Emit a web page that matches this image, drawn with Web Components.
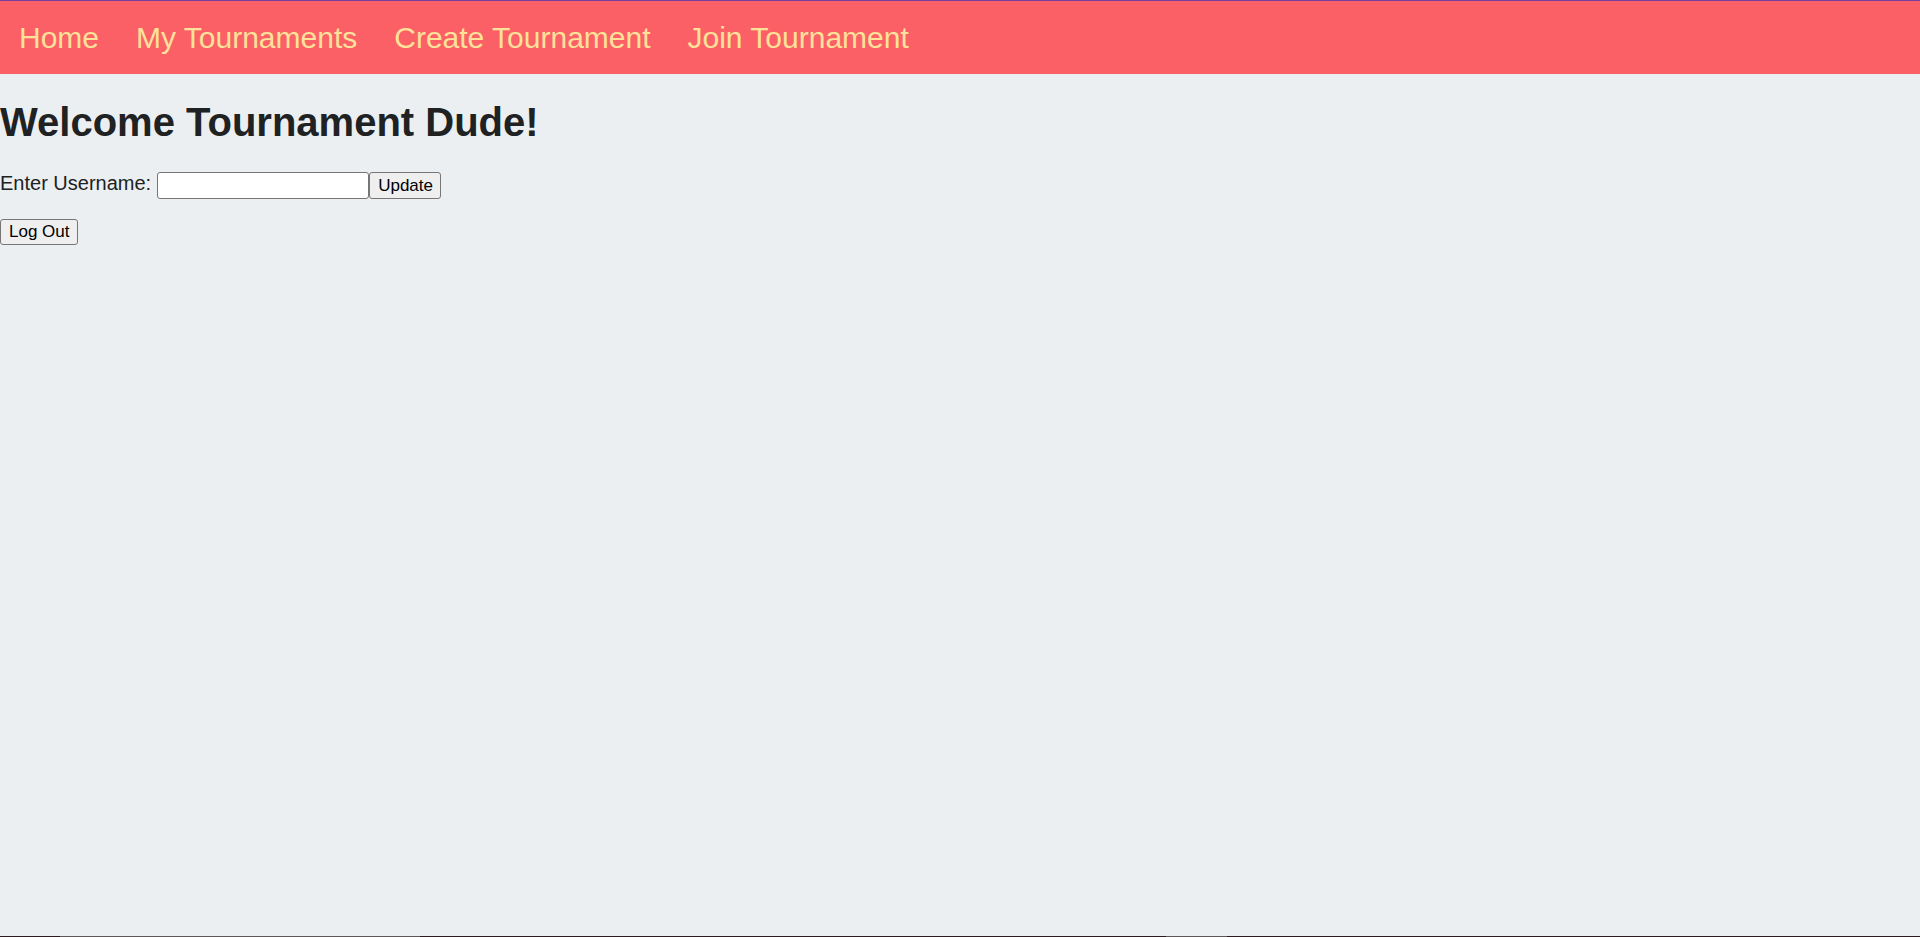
<!DOCTYPE html>
<html lang="en">
<head>
<meta charset="utf-8">
<title>Tournament Dude</title>
<style>
html, body { margin: 0; }
body { font: 20px "Liberation Sans", Arial, sans-serif; color: #202122; background: #ebeff2; }
</style>
</head>
<body>
<tournament-app></tournament-app>
<script>
class NavBar extends HTMLElement {
  constructor() {
    super();
    this.attachShadow({ mode: "open" }).innerHTML = `
      <style>
        :host { display: block; background: #fb6066; border-top: 1px solid #7340a0; }
        nav { display: flex; flex-wrap: wrap; padding-left: 19px; gap: 37px; }
      </style>
      <nav aria-label="Main"><slot></slot></nav>`;
  }
}
class NavLink extends HTMLElement {
  constructor() {
    super();
    this.attachShadow({ mode: "open" }).innerHTML = `
      <style>
        :host { display: block; }
        a { display: block; padding: 19px 0; font-size: 30px; line-height: 35px; color: #ffe29a; text-decoration: none; }
      </style>
      <a><slot></slot></a>`;
    this.shadowRoot.querySelector("a").href = this.getAttribute("to") || "#";
  }
}
const controlStyles = `
  button, input { box-sizing: border-box; font: inherit; margin: 0; border: 1px solid #767676; border-radius: 3px; color: #000; }
  button { font-size: 17px; line-height: 20px; padding: 2px 7px 2px 8px; background: #efefef; }`;

class UsernameForm extends HTMLElement {
  constructor() {
    super();
    this.attachShadow({ mode: "open" }).innerHTML = `
      <style>
        :host { display: block; }
        ${controlStyles}
        form { display: flex; align-items: stretch; }
        label { line-height: 23px; margin-right: 6px; }
        input { width: 212px; height: 27px; font-size: 17px; padding: 1px 3px; background: #fff; }
      </style>
      <form>
        <label for="username">Enter Username:</label>
        <input id="username" type="text">
        <button type="submit">Update</button>
      </form>`;
    this.shadowRoot.querySelector("form").addEventListener("submit", e => e.preventDefault());
  }
}
class LogoutButton extends HTMLElement {
  constructor() {
    super();
    this.attachShadow({ mode: "open" }).innerHTML = `
      <style>
        :host { display: block; }
        ${controlStyles}
        button { display: block; }
      </style>
      <button type="button"><slot></slot></button>`;
  }
}
class TournamentApp extends HTMLElement {
  constructor() {
    super();
    this.attachShadow({ mode: "open" }).innerHTML = `
      <style>
        :host { display: flex; flex-direction: column; min-height: 100vh; }
        main { flex: 1; display: flex; flex-direction: column; align-items: flex-start; gap: 20px; padding-top: 24px; }
        h1 { margin: 0 0 6px; font-size: 40px; line-height: 48px; }
        .edge { display: grid; grid-template-columns: 60fr 360fr 746fr 61fr 693fr; height: 1px; background: #2c1c22; }
        .edge .open { background: #5e5759; }
      </style>
      <nav-bar>
        <nav-link to="#home">Home</nav-link>
        <nav-link to="#mine">My Tournaments</nav-link>
        <nav-link to="#create">Create Tournament</nav-link>
        <nav-link to="#join">Join Tournament</nav-link>
      </nav-bar>
      <main>
        <h1>Welcome Tournament Dude!</h1>
        <username-form></username-form>
        <logout-button>Log Out</logout-button>
      </main>
      <div class="edge"><span></span><span class="open"></span><span></span><span class="open"></span><span></span></div>`;
  }
}
customElements.define("nav-bar", NavBar);
customElements.define("nav-link", NavLink);
customElements.define("username-form", UsernameForm);
customElements.define("logout-button", LogoutButton);
customElements.define("tournament-app", TournamentApp);
</script>
</body>
</html>
